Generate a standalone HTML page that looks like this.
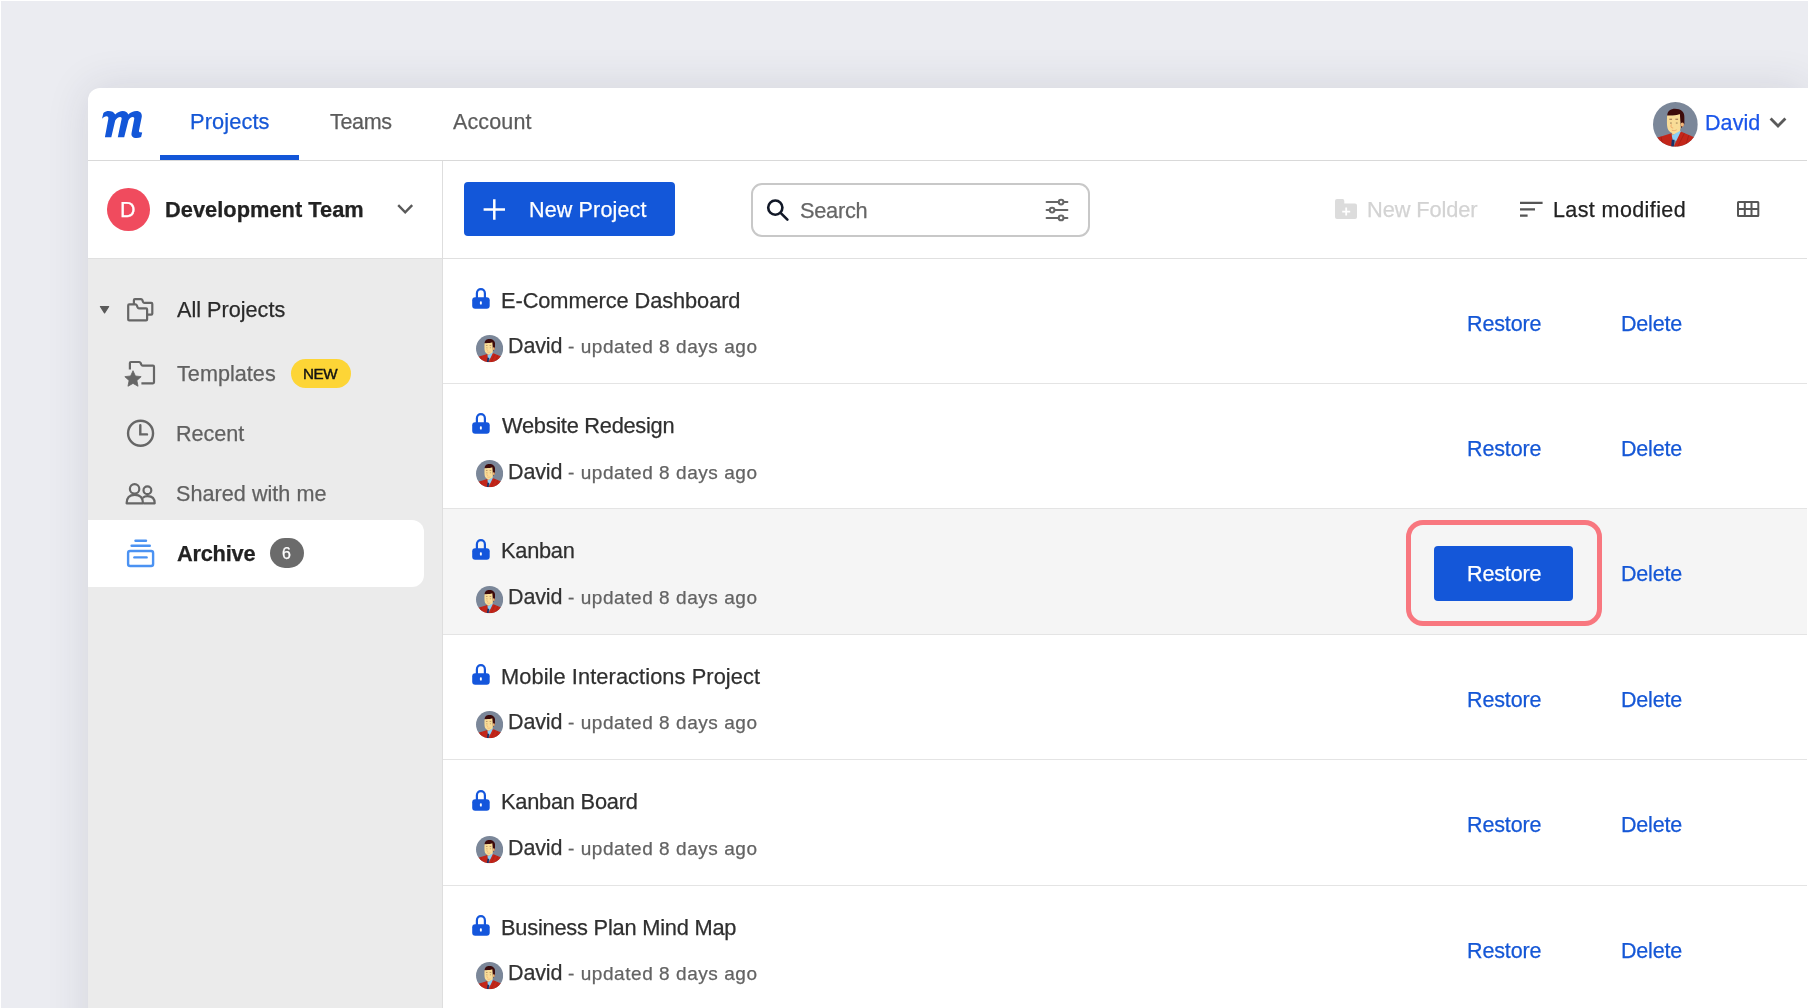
<!DOCTYPE html>
<html><head><meta charset="utf-8"><title>Moqups Archive</title>
<style>
html,body{margin:0;padding:0;width:1808px;height:1008px;overflow:hidden;background:#ebecf1}
body{position:relative;font-family:"Liberation Sans",sans-serif}
.t{position:absolute;white-space:nowrap;-webkit-font-smoothing:antialiased;will-change:transform}
#win{position:absolute;left:88px;top:88px;width:1719px;height:1000px;background:#fff;border-radius:12px 0 0 0;box-shadow:0 0 44px 0 rgba(40,44,70,0.12)}
#hdr{position:absolute;left:88px;top:160px;width:1720px;height:1px;background:#d9d9d9}
#tb{position:absolute;left:88px;top:258px;width:1720px;height:1px;background:#e0e0e0}
#sb{position:absolute;left:88px;top:259px;width:354px;height:760px;background:#ebebeb}
#vl{position:absolute;left:442px;top:161px;width:1px;height:860px;background:#dedede}
#edge{position:absolute;left:0;top:0;width:1808px;height:1px;background:#fff}
#edgel{position:absolute;left:0;top:0;width:1px;height:1008px;background:#fff}
#edger{position:absolute;left:1807px;top:88px;width:1px;height:920px;background:#fff}
</style></head><body>
<div id="edge"></div><div id="edgel"></div>
<div id="win"></div>
<div id="sb"></div>
<svg style="position:absolute;left:98px;top:106px;width:48px;height:36px;overflow:visible" viewBox="98 106 48 36" ><path fill="#1356d8" d="M102.0 118.7 L103.4 113.0 C105 111.6 107 111.1 108.6 111.1 C111.5 111.1 114.2 112.2 115.1 114.6
C117.5 112.3 120.2 111.1 122.7 111.1 C125.6 111.1 127.6 112.4 128.2 114.6 C130.6 112.4 133.6 111.1 136.4 111.1
C140.2 111.1 142.2 113.4 141.8 116.8 L139.0 130.5 C138.8 131.6 139.3 132.3 140.3 132.3 L142.2 132.5 L141.1 137.0
C139.8 137.7 138.2 138.1 136.6 138.1 C132.6 138.1 130.9 136 131.6 132.8 L134.2 119.0 C134.5 117.6 133.9 116.9 132.8 116.9
C131 116.9 129.1 118.5 128.4 120.6 L124.2 137.3 L117.8 137.3 L121.6 119.0 C121.9 117.6 121.3 116.9 120.2 116.9
C118.4 116.9 116.2 118.4 115.2 120.6 L111.3 137.3 L104.9 137.3 L108.3 119.0 C108.6 117.2 108 116.2 106.6 116.2
C105 116.2 103.3 117.3 102.0 118.7 Z"/></svg>
<div class="t" style="left:189.85px;top:111px;font-size:21.8px;line-height:21.8px;color:#1557d6;font-weight:400;letter-spacing:0.107px;-webkit-text-stroke:0.25px #1557d6;">Projects</div>
<div style="position:absolute;left:160px;top:155px;width:139px;height:5px;background:#1356d8"></div>
<div class="t" style="left:329.75px;top:112px;font-size:21.5px;line-height:21.5px;color:#5c5c5c;font-weight:400;letter-spacing:-0.325px;-webkit-text-stroke:0.25px #5c5c5c;">Teams</div>
<div class="t" style="left:452.60px;top:112px;font-size:21.5px;line-height:21.5px;color:#5c5c5c;font-weight:400;letter-spacing:0.125px;-webkit-text-stroke:0.25px #5c5c5c;">Account</div>
<svg style="position:absolute;left:1652.1px;top:101.2px;width:46.8px;height:46.8px;overflow:visible" viewBox="1652.1 101.2 46.8 46.8" ><defs><clipPath id="ch"><circle cx="50" cy="50" r="50"/></clipPath></defs>
<g transform="translate(1653.1,102.19999999999999) scale(0.44799999999999995)"><g clip-path="url(#ch)"><rect x="0" y="0" width="100" height="100" fill="#7b8799"/>
<path d="M32 31 C31 20 40 15 49 15 C62 15 71 22 70 35 L70 49 C68 53 66 56 62 58 L59 30 Z" fill="#3d0b0b"/>
<ellipse cx="65.5" cy="50.5" rx="3.6" ry="5" fill="#f2b67a"/>
<path d="M31.5 30 C40 31 52 30 60 27 L62 57 C61 63 58 68 52 70 C44 71.5 38 68 34.5 63 C31.5 58 30.5 50 31.5 30 Z" fill="#f9dc97"/>
<path d="M42 66 L60 58 L61.5 72 L44 77 Z" fill="#f9dc97"/>
<path d="M43 71 C47 72 51 71 54 68 L55 72 C51 75 47 75 44 74 Z" fill="#f09a5a"/>
<path d="M42 75 L61 64 L65 70 L52 87 L44 84 Z" fill="#8ccef5"/>
<path d="M0 82 L18 77 L41 70 L46 100 L0 100 Z" fill="#c3261a"/>
<path d="M46 100 L62 66 L88 77 L100 83 L100 100 Z" fill="#c3261a"/>
<path d="M18 77 L22 100 M70 70 L55 100 M80 74 L72 100" stroke="#9c1a12" stroke-width="1.3" fill="none"/>
<path d="M42 84 L48 84 L46.5 100 L40.5 100 Z" fill="#15306a"/>
<path d="M36.5 38.5 H42.5 M50 38.5 H56" stroke="#6b3a2a" stroke-width="1.6"/>
<path d="M38 47 H42 M51 47 H55" stroke="#7a5a3a" stroke-width="1.6"/>
<path d="M41 50 C38.5 56 41 58 45 58 M42 63 C46 64.5 50 64 53 62" stroke="#ee9a5c" stroke-width="1.6" fill="none"/></g></g></svg>
<div class="t" style="left:1704.55px;top:113px;font-size:21.5px;line-height:21.5px;color:#1a55ea;font-weight:400;letter-spacing:0.075px;-webkit-text-stroke:0.25px #1a55ea;">David</div>
<svg style="position:absolute;left:1766px;top:114px;width:24px;height:18px;overflow:visible" viewBox="1766 114 24 18" ><path d="M1770.6 118.4 L1778 126 L1785.4 118.4" fill="none" stroke="#5a5a5a" stroke-width="2.8" stroke-linecap="butt"/></svg>
<div style="position:absolute;left:107px;top:188px;width:42.6px;height:42.6px;border-radius:50%;background:#f04b5e"></div>
<div class="t" style="left:120.35px;top:200px;font-size:21.5px;line-height:21.5px;color:#ffffff;font-weight:400;letter-spacing:0px;-webkit-text-stroke:0.25px #ffffff;">D</div>
<div class="t" style="left:165.05px;top:199px;font-size:21.8px;line-height:21.8px;color:#222222;font-weight:700;letter-spacing:0.03px;-webkit-text-stroke:0.25px #222222;">Development Team</div>
<svg style="position:absolute;left:394px;top:201px;width:24px;height:16px;overflow:visible" viewBox="394 201 24 16" ><path d="M398.2 205.2 L405.2 212.4 L412.2 205.2" fill="none" stroke="#5a5a5a" stroke-width="2.4"/></svg>
<div style="position:absolute;left:464px;top:182.4px;width:211px;height:53.7px;border-radius:4px;background:#1357d9"></div>
<svg style="position:absolute;left:480px;top:196px;width:28px;height:28px;overflow:visible" viewBox="480 196 28 28" ><path d="M494.3 199.2 V219.8 M483.6 209.5 H505" stroke="#fff" stroke-width="2.5"/></svg>
<div class="t" style="left:529.25px;top:200px;font-size:21.5px;line-height:21.5px;color:#ffffff;font-weight:400;letter-spacing:0.155px;-webkit-text-stroke:0.25px #ffffff;">New Project</div>
<div style="position:absolute;left:751px;top:182.6px;width:334.5px;height:50px;border:2px solid #c8c8c8;border-radius:11px;background:#fff"></div>
<svg style="position:absolute;left:762px;top:195px;width:30px;height:30px;overflow:visible" viewBox="762 195 30 30" ><circle cx="775.3" cy="207.6" r="7.1" fill="none" stroke="#111827" stroke-width="2.6"/><path d="M780.6 212.9 L787.4 219.7" stroke="#111827" stroke-width="2.6" stroke-linecap="round"/></svg>
<div class="t" style="left:800.20px;top:200px;font-size:21.8px;line-height:21.8px;color:#666666;font-weight:400;letter-spacing:-0.27px;-webkit-text-stroke:0.25px #666666;">Search</div>
<svg style="position:absolute;left:1042px;top:196px;width:30px;height:28px;overflow:visible" viewBox="1042 196 30 28" ><g stroke="#666" stroke-width="2" stroke-linecap="round" fill="none">
<path d="M1046.6 202.1 H1058.6 M1063.6 202.1 H1067.4 M1046.6 210.1 H1049.6 M1054.6 210.1 H1067.4 M1046.6 217.9 H1058.6 M1063.6 217.9 H1067.4"/>
<circle cx="1061.1" cy="202.1" r="2.4"/><circle cx="1052.1" cy="210.1" r="2.4"/><circle cx="1061.1" cy="217.9" r="2.4"/></g></svg>
<svg style="position:absolute;left:1332px;top:196px;width:28px;height:26px;overflow:visible" viewBox="1332 196 28 26" ><path fill="#dcdcdc" d="M1335 201 Q1335 199.1 1337 199.1 H1342.6 Q1344.3 199.1 1344.3 201 V203.5 H1355 Q1357 203.5 1357 205.5 V217 Q1357 219 1355 219 H1337 Q1335 219 1335 217 Z"/>
<path d="M1346.2 207.6 V215.6 M1342.2 211.6 H1350.2" stroke="#fff" stroke-width="1.8"/></svg>
<div class="t" style="left:1366.55px;top:199px;font-size:21.8px;line-height:21.8px;color:#d3d3d3;font-weight:400;letter-spacing:-0.1px;-webkit-text-stroke:0.25px #d3d3d3;">New Folder</div>
<svg style="position:absolute;left:1516px;top:198px;width:30px;height:22px;overflow:visible" viewBox="1516 198 30 22" ><path d="M1520 202.9 H1542.6 M1520 209.4 H1535 M1520 215.7 H1527.6" stroke="#555" stroke-width="2.3"/></svg>
<div class="t" style="left:1553.35px;top:200px;font-size:21.5px;line-height:21.5px;color:#222222;font-weight:400;letter-spacing:0.396px;-webkit-text-stroke:0.25px #222222;">Last modified</div>
<svg style="position:absolute;left:1734px;top:198px;width:28px;height:22px;overflow:visible" viewBox="1734 198 28 22" ><g fill="none" stroke="#555" stroke-width="2"><rect x="1738" y="202" width="20.3" height="14.1" rx="0.5"/><path d="M1744.8 202 V216.1 M1751.5 202 V216.1 M1738 209.05 H1758.3"/></g></svg>
<svg style="position:absolute;left:96px;top:302px;width:16px;height:14px;overflow:visible" viewBox="96 302 16 14" ><path d="M100.4 306.5 L108.7 306.5 L104.55 312.9 Z" fill="#5a5a5a" stroke="#5a5a5a" stroke-width="1.2" stroke-linejoin="round"/></svg>
<svg style="position:absolute;left:122px;top:294px;width:36px;height:32px;overflow:visible" viewBox="122 294 36 32" ><g fill="none" stroke="#666" stroke-width="2.2" stroke-linejoin="round">
<path d="M128.2 305.4 Q128.2 304.4 129.2 304.4 H135.4 Q136.4 304.4 136.8 305.4 L137.6 307.4 Q138 308.4 139 308.4 H146.1 Q147.1 308.4 147.1 309.4 V319.4 Q147.1 320.4 146.1 320.4 H129.2 Q128.2 320.4 128.2 319.4 Z"/>
<path d="M133.9 304.4 V300.2 Q133.9 299.2 134.9 299.2 H141 Q142 299.2 142.4 300.2 L143 301.9 Q143.4 302.9 144.4 302.9 H151.3 Q152.3 302.9 152.3 303.9 V313.7 Q152.3 314.7 151.3 314.7 H147.1"/>
</g></svg>
<div class="t" style="left:177.40px;top:299px;font-size:21.6px;line-height:21.6px;color:#2a2a2a;font-weight:400;letter-spacing:0.023px;-webkit-text-stroke:0.25px #2a2a2a;">All Projects</div>
<svg style="position:absolute;left:122px;top:358px;width:36px;height:32px;overflow:visible" viewBox="122 358 36 32" ><g fill="none" stroke="#666" stroke-width="2.2" stroke-linejoin="round">
<path d="M129.9 369.6 V363 Q129.9 362 130.9 362 H139.2 Q140.2 362 140.6 363 L141.3 364.7 Q141.7 365.7 142.7 365.7 H153 Q154 365.7 154 366.7 V382.3 Q154 383.3 153 383.3 H141.4"/></g>
<path fill="#666" stroke="#666" stroke-width="0.8" stroke-linejoin="round" d="M133.00 370.70 L135.41 375.98 L141.18 376.64 L136.90 380.57 L138.05 386.26 L133.00 383.40 L127.95 386.26 L129.10 380.57 L124.82 376.64 L130.59 375.98 Z"/></svg>
<div class="t" style="left:177.15px;top:363px;font-size:21.6px;line-height:21.6px;color:#616161;font-weight:400;letter-spacing:0.037px;-webkit-text-stroke:0.25px #616161;">Templates</div>
<div style="position:absolute;left:290.9px;top:358.5px;width:60.1px;height:29.8px;border-radius:15px;background:#fdd536"></div>
<div class="t" style="left:303.00px;top:366px;font-size:15.2px;line-height:15.2px;color:#141414;font-weight:400;letter-spacing:-0.425px;-webkit-text-stroke:0.25px #141414;-webkit-text-stroke:0.45px #141414;">NEW</div>
<svg style="position:absolute;left:122px;top:415px;width:36px;height:36px;overflow:visible" viewBox="122 415 36 36" ><g fill="none" stroke="#666" stroke-width="2.4"><circle cx="140.55" cy="433.25" r="12.5"/><path d="M140.3 425.2 V434.4 H147" stroke-linecap="round"/></g></svg>
<div class="t" style="left:176.05px;top:423px;font-size:21.6px;line-height:21.6px;color:#616161;font-weight:400;letter-spacing:-0.03px;-webkit-text-stroke:0.25px #616161;">Recent</div>
<svg style="position:absolute;left:122px;top:478px;width:38px;height:30px;overflow:visible" viewBox="122 478 38 30" ><g fill="none" stroke="#666" stroke-width="2.2" stroke-linejoin="round">
<circle cx="134.6" cy="488.9" r="4.7"/><path d="M126.6 503.3 C126.6 497.6 130 494.8 134.8 494.8 C139.6 494.8 143 497.6 143 503.3 Z"/>
<circle cx="147.4" cy="490.2" r="3.9"/><path d="M143.5 503.3 H154.7 C154.7 498.6 151.8 496.2 147.6 496.2 C145.6 496.2 144 496.8 142.6 497.8"/>
</g></svg>
<div class="t" style="left:176.20px;top:483px;font-size:21.6px;line-height:21.6px;color:#616161;font-weight:400;letter-spacing:0.035px;-webkit-text-stroke:0.25px #616161;">Shared with me</div>
<div style="position:absolute;left:88px;top:519.5px;width:335.9px;height:67.5px;border-radius:0 12px 12px 0;background:#fff"></div>
<svg style="position:absolute;left:122px;top:535px;width:36px;height:36px;overflow:visible" viewBox="122 535 36 36" ><g fill="none" stroke="#4b92f2" stroke-width="2.4" stroke-linecap="round">
<path d="M135.5 540.8 H146"/><path d="M131.6 545.8 H149.8"/>
<rect x="128.1" y="551" width="25" height="15" rx="2"/><path d="M134.4 557.4 H146.6"/></g></svg>
<div class="t" style="left:176.70px;top:543px;font-size:21.8px;line-height:21.8px;color:#222222;font-weight:700;letter-spacing:-0.242px;-webkit-text-stroke:0.25px #222222;">Archive</div>
<div style="position:absolute;left:270px;top:538.4px;width:33.7px;height:29.8px;border-radius:15px;background:#6b6b6b"></div>
<div class="t" style="left:281.95px;top:546px;font-size:16px;line-height:16px;color:#ffffff;font-weight:400;letter-spacing:0px;-webkit-text-stroke:0.25px #ffffff;">6</div>
<div style="position:absolute;left:443px;top:258.60px;width:1365px;height:125.40px;background:#ffffff;border-bottom:1px solid #e4e4e4;box-sizing:border-box"></div>
<svg style="position:absolute;left:468px;top:284.0px;width:28px;height:28px;overflow:visible" viewBox="468 284.0 28 28" ><g fill="#1456dc"><rect x="472.2" y="297.20" width="17.5" height="11.5" rx="3"/></g>
<path d="M476.9 298.50 V293.20 A4 4 0 0 1 484.9 293.20 V298.50" fill="none" stroke="#1456dc" stroke-width="2.2"/>
<rect x="479.9" y="301.20" width="1.9" height="3.4" rx="0.9" fill="#fff"/></svg>
<div class="t" style="left:500.55px;top:290px;font-size:21.8px;line-height:21.8px;color:#2f2f2f;font-weight:400;letter-spacing:-0.084px;-webkit-text-stroke:0.25px #2f2f2f;">E-Commerce Dashboard</div>
<svg style="position:absolute;left:475.3px;top:333.7px;width:29.2px;height:29.2px;overflow:visible" viewBox="475.3 333.7 29.2 29.2" ><defs><clipPath id="cr0"><circle cx="50" cy="50" r="50"/></clipPath></defs>
<g transform="translate(476.29999999999995,334.7) scale(0.272)"><g clip-path="url(#cr0)"><rect x="0" y="0" width="100" height="100" fill="#7b8799"/>
<path d="M32 31 C31 20 40 15 49 15 C62 15 71 22 70 35 L70 49 C68 53 66 56 62 58 L59 30 Z" fill="#3d0b0b"/>
<ellipse cx="65.5" cy="50.5" rx="3.6" ry="5" fill="#f2b67a"/>
<path d="M31.5 30 C40 31 52 30 60 27 L62 57 C61 63 58 68 52 70 C44 71.5 38 68 34.5 63 C31.5 58 30.5 50 31.5 30 Z" fill="#f9dc97"/>
<path d="M42 66 L60 58 L61.5 72 L44 77 Z" fill="#f9dc97"/>
<path d="M43 71 C47 72 51 71 54 68 L55 72 C51 75 47 75 44 74 Z" fill="#f09a5a"/>
<path d="M42 75 L61 64 L65 70 L52 87 L44 84 Z" fill="#8ccef5"/>
<path d="M0 82 L18 77 L41 70 L46 100 L0 100 Z" fill="#c3261a"/>
<path d="M46 100 L62 66 L88 77 L100 83 L100 100 Z" fill="#c3261a"/>
<path d="M18 77 L22 100 M70 70 L55 100 M80 74 L72 100" stroke="#9c1a12" stroke-width="1.3" fill="none"/>
<path d="M42 84 L48 84 L46.5 100 L40.5 100 Z" fill="#15306a"/>
<path d="M36.5 38.5 H42.5 M50 38.5 H56" stroke="#6b3a2a" stroke-width="1.6"/>
<path d="M38 47 H42 M51 47 H55" stroke="#7a5a3a" stroke-width="1.6"/>
<path d="M41 50 C38.5 56 41 58 45 58 M42 63 C46 64.5 50 64 53 62" stroke="#ee9a5c" stroke-width="1.6" fill="none"/></g></g></svg>
<div class="t" style="left:507.55px;top:336px;font-size:21.5px;line-height:21.5px;color:#333333;font-weight:400;letter-spacing:-0.15px;-webkit-text-stroke:0.25px #333333;">David</div>
<div class="t" style="left:568.35px;top:337px;font-size:19.0px;line-height:19.0px;color:#636363;font-weight:400;letter-spacing:0.553px;-webkit-text-stroke:0.25px #636363;">- updated 8 days ago</div>
<div class="t" style="left:1466.85px;top:314px;font-size:21.5px;line-height:21.5px;color:#1557d6;font-weight:400;letter-spacing:-0.125px;-webkit-text-stroke:0.25px #1557d6;">Restore</div>
<div class="t" style="left:1621.25px;top:314px;font-size:21.5px;line-height:21.5px;color:#1557d6;font-weight:400;letter-spacing:-0.18px;-webkit-text-stroke:0.25px #1557d6;">Delete</div>
<div style="position:absolute;left:443px;top:384.00px;width:1365px;height:125.40px;background:#ffffff;border-bottom:1px solid #e4e4e4;box-sizing:border-box"></div>
<svg style="position:absolute;left:468px;top:409.4px;width:28px;height:28px;overflow:visible" viewBox="468 409.4 28 28" ><g fill="#1456dc"><rect x="472.2" y="422.60" width="17.5" height="11.5" rx="3"/></g>
<path d="M476.9 423.90 V418.60 A4 4 0 0 1 484.9 418.60 V423.90" fill="none" stroke="#1456dc" stroke-width="2.2"/>
<rect x="479.9" y="426.60" width="1.9" height="3.4" rx="0.9" fill="#fff"/></svg>
<div class="t" style="left:502.30px;top:415px;font-size:21.8px;line-height:21.8px;color:#2f2f2f;font-weight:400;letter-spacing:-0.263px;-webkit-text-stroke:0.25px #2f2f2f;">Website Redesign</div>
<svg style="position:absolute;left:475.3px;top:459.1px;width:29.2px;height:29.2px;overflow:visible" viewBox="475.3 459.1 29.2 29.2" ><defs><clipPath id="cr1"><circle cx="50" cy="50" r="50"/></clipPath></defs>
<g transform="translate(476.29999999999995,460.1) scale(0.272)"><g clip-path="url(#cr1)"><rect x="0" y="0" width="100" height="100" fill="#7b8799"/>
<path d="M32 31 C31 20 40 15 49 15 C62 15 71 22 70 35 L70 49 C68 53 66 56 62 58 L59 30 Z" fill="#3d0b0b"/>
<ellipse cx="65.5" cy="50.5" rx="3.6" ry="5" fill="#f2b67a"/>
<path d="M31.5 30 C40 31 52 30 60 27 L62 57 C61 63 58 68 52 70 C44 71.5 38 68 34.5 63 C31.5 58 30.5 50 31.5 30 Z" fill="#f9dc97"/>
<path d="M42 66 L60 58 L61.5 72 L44 77 Z" fill="#f9dc97"/>
<path d="M43 71 C47 72 51 71 54 68 L55 72 C51 75 47 75 44 74 Z" fill="#f09a5a"/>
<path d="M42 75 L61 64 L65 70 L52 87 L44 84 Z" fill="#8ccef5"/>
<path d="M0 82 L18 77 L41 70 L46 100 L0 100 Z" fill="#c3261a"/>
<path d="M46 100 L62 66 L88 77 L100 83 L100 100 Z" fill="#c3261a"/>
<path d="M18 77 L22 100 M70 70 L55 100 M80 74 L72 100" stroke="#9c1a12" stroke-width="1.3" fill="none"/>
<path d="M42 84 L48 84 L46.5 100 L40.5 100 Z" fill="#15306a"/>
<path d="M36.5 38.5 H42.5 M50 38.5 H56" stroke="#6b3a2a" stroke-width="1.6"/>
<path d="M38 47 H42 M51 47 H55" stroke="#7a5a3a" stroke-width="1.6"/>
<path d="M41 50 C38.5 56 41 58 45 58 M42 63 C46 64.5 50 64 53 62" stroke="#ee9a5c" stroke-width="1.6" fill="none"/></g></g></svg>
<div class="t" style="left:507.55px;top:462px;font-size:21.5px;line-height:21.5px;color:#333333;font-weight:400;letter-spacing:-0.15px;-webkit-text-stroke:0.25px #333333;">David</div>
<div class="t" style="left:568.35px;top:463px;font-size:19.0px;line-height:19.0px;color:#636363;font-weight:400;letter-spacing:0.553px;-webkit-text-stroke:0.25px #636363;">- updated 8 days ago</div>
<div class="t" style="left:1466.85px;top:439px;font-size:21.5px;line-height:21.5px;color:#1557d6;font-weight:400;letter-spacing:-0.125px;-webkit-text-stroke:0.25px #1557d6;">Restore</div>
<div class="t" style="left:1621.25px;top:439px;font-size:21.5px;line-height:21.5px;color:#1557d6;font-weight:400;letter-spacing:-0.18px;-webkit-text-stroke:0.25px #1557d6;">Delete</div>
<div style="position:absolute;left:443px;top:509.40px;width:1365px;height:125.40px;background:#f5f5f5;border-bottom:1px solid #e4e4e4;box-sizing:border-box"></div>
<svg style="position:absolute;left:468px;top:534.8px;width:28px;height:28px;overflow:visible" viewBox="468 534.8 28 28" ><g fill="#1456dc"><rect x="472.2" y="548.00" width="17.5" height="11.5" rx="3"/></g>
<path d="M476.9 549.30 V544.00 A4 4 0 0 1 484.9 544.00 V549.30" fill="none" stroke="#1456dc" stroke-width="2.2"/>
<rect x="479.9" y="552.00" width="1.9" height="3.4" rx="0.9" fill="#fff"/></svg>
<div class="t" style="left:500.55px;top:540px;font-size:21.8px;line-height:21.8px;color:#2f2f2f;font-weight:400;letter-spacing:-0.26px;-webkit-text-stroke:0.25px #2f2f2f;">Kanban</div>
<svg style="position:absolute;left:475.3px;top:584.5px;width:29.2px;height:29.2px;overflow:visible" viewBox="475.3 584.5 29.2 29.2" ><defs><clipPath id="cr2"><circle cx="50" cy="50" r="50"/></clipPath></defs>
<g transform="translate(476.29999999999995,585.5) scale(0.272)"><g clip-path="url(#cr2)"><rect x="0" y="0" width="100" height="100" fill="#7b8799"/>
<path d="M32 31 C31 20 40 15 49 15 C62 15 71 22 70 35 L70 49 C68 53 66 56 62 58 L59 30 Z" fill="#3d0b0b"/>
<ellipse cx="65.5" cy="50.5" rx="3.6" ry="5" fill="#f2b67a"/>
<path d="M31.5 30 C40 31 52 30 60 27 L62 57 C61 63 58 68 52 70 C44 71.5 38 68 34.5 63 C31.5 58 30.5 50 31.5 30 Z" fill="#f9dc97"/>
<path d="M42 66 L60 58 L61.5 72 L44 77 Z" fill="#f9dc97"/>
<path d="M43 71 C47 72 51 71 54 68 L55 72 C51 75 47 75 44 74 Z" fill="#f09a5a"/>
<path d="M42 75 L61 64 L65 70 L52 87 L44 84 Z" fill="#8ccef5"/>
<path d="M0 82 L18 77 L41 70 L46 100 L0 100 Z" fill="#c3261a"/>
<path d="M46 100 L62 66 L88 77 L100 83 L100 100 Z" fill="#c3261a"/>
<path d="M18 77 L22 100 M70 70 L55 100 M80 74 L72 100" stroke="#9c1a12" stroke-width="1.3" fill="none"/>
<path d="M42 84 L48 84 L46.5 100 L40.5 100 Z" fill="#15306a"/>
<path d="M36.5 38.5 H42.5 M50 38.5 H56" stroke="#6b3a2a" stroke-width="1.6"/>
<path d="M38 47 H42 M51 47 H55" stroke="#7a5a3a" stroke-width="1.6"/>
<path d="M41 50 C38.5 56 41 58 45 58 M42 63 C46 64.5 50 64 53 62" stroke="#ee9a5c" stroke-width="1.6" fill="none"/></g></g></svg>
<div class="t" style="left:507.55px;top:587px;font-size:21.5px;line-height:21.5px;color:#333333;font-weight:400;letter-spacing:-0.15px;-webkit-text-stroke:0.25px #333333;">David</div>
<div class="t" style="left:568.35px;top:588px;font-size:19.0px;line-height:19.0px;color:#636363;font-weight:400;letter-spacing:0.553px;-webkit-text-stroke:0.25px #636363;">- updated 8 days ago</div>
<div style="position:absolute;left:1406px;top:519.90px;width:196px;height:106px;border:5.5px solid #f8777f;border-radius:17px;box-sizing:border-box"></div>
<div style="position:absolute;left:1433.9px;top:545.8px;width:139.4px;height:55.4px;border-radius:4px;background:#1457d9"></div>
<div class="t" style="left:1466.85px;top:564px;font-size:21.5px;line-height:21.5px;color:#ffffff;font-weight:400;letter-spacing:-0.125px;-webkit-text-stroke:0.25px #ffffff;">Restore</div>
<div class="t" style="left:1621.25px;top:564px;font-size:21.5px;line-height:21.5px;color:#1557d6;font-weight:400;letter-spacing:-0.18px;-webkit-text-stroke:0.25px #1557d6;">Delete</div>
<div style="position:absolute;left:443px;top:634.80px;width:1365px;height:125.40px;background:#ffffff;border-bottom:1px solid #e4e4e4;box-sizing:border-box"></div>
<svg style="position:absolute;left:468px;top:660.2px;width:28px;height:28px;overflow:visible" viewBox="468 660.2 28 28" ><g fill="#1456dc"><rect x="472.2" y="673.40" width="17.5" height="11.5" rx="3"/></g>
<path d="M476.9 674.70 V669.40 A4 4 0 0 1 484.9 669.40 V674.70" fill="none" stroke="#1456dc" stroke-width="2.2"/>
<rect x="479.9" y="677.40" width="1.9" height="3.4" rx="0.9" fill="#fff"/></svg>
<div class="t" style="left:500.55px;top:666px;font-size:21.8px;line-height:21.8px;color:#2f2f2f;font-weight:400;letter-spacing:0.085px;-webkit-text-stroke:0.25px #2f2f2f;">Mobile Interactions Project</div>
<svg style="position:absolute;left:475.3px;top:709.9px;width:29.2px;height:29.2px;overflow:visible" viewBox="475.3 709.9 29.2 29.2" ><defs><clipPath id="cr3"><circle cx="50" cy="50" r="50"/></clipPath></defs>
<g transform="translate(476.29999999999995,710.9) scale(0.272)"><g clip-path="url(#cr3)"><rect x="0" y="0" width="100" height="100" fill="#7b8799"/>
<path d="M32 31 C31 20 40 15 49 15 C62 15 71 22 70 35 L70 49 C68 53 66 56 62 58 L59 30 Z" fill="#3d0b0b"/>
<ellipse cx="65.5" cy="50.5" rx="3.6" ry="5" fill="#f2b67a"/>
<path d="M31.5 30 C40 31 52 30 60 27 L62 57 C61 63 58 68 52 70 C44 71.5 38 68 34.5 63 C31.5 58 30.5 50 31.5 30 Z" fill="#f9dc97"/>
<path d="M42 66 L60 58 L61.5 72 L44 77 Z" fill="#f9dc97"/>
<path d="M43 71 C47 72 51 71 54 68 L55 72 C51 75 47 75 44 74 Z" fill="#f09a5a"/>
<path d="M42 75 L61 64 L65 70 L52 87 L44 84 Z" fill="#8ccef5"/>
<path d="M0 82 L18 77 L41 70 L46 100 L0 100 Z" fill="#c3261a"/>
<path d="M46 100 L62 66 L88 77 L100 83 L100 100 Z" fill="#c3261a"/>
<path d="M18 77 L22 100 M70 70 L55 100 M80 74 L72 100" stroke="#9c1a12" stroke-width="1.3" fill="none"/>
<path d="M42 84 L48 84 L46.5 100 L40.5 100 Z" fill="#15306a"/>
<path d="M36.5 38.5 H42.5 M50 38.5 H56" stroke="#6b3a2a" stroke-width="1.6"/>
<path d="M38 47 H42 M51 47 H55" stroke="#7a5a3a" stroke-width="1.6"/>
<path d="M41 50 C38.5 56 41 58 45 58 M42 63 C46 64.5 50 64 53 62" stroke="#ee9a5c" stroke-width="1.6" fill="none"/></g></g></svg>
<div class="t" style="left:507.55px;top:712px;font-size:21.5px;line-height:21.5px;color:#333333;font-weight:400;letter-spacing:-0.15px;-webkit-text-stroke:0.25px #333333;">David</div>
<div class="t" style="left:568.35px;top:713px;font-size:19.0px;line-height:19.0px;color:#636363;font-weight:400;letter-spacing:0.553px;-webkit-text-stroke:0.25px #636363;">- updated 8 days ago</div>
<div class="t" style="left:1466.85px;top:690px;font-size:21.5px;line-height:21.5px;color:#1557d6;font-weight:400;letter-spacing:-0.125px;-webkit-text-stroke:0.25px #1557d6;">Restore</div>
<div class="t" style="left:1621.25px;top:690px;font-size:21.5px;line-height:21.5px;color:#1557d6;font-weight:400;letter-spacing:-0.18px;-webkit-text-stroke:0.25px #1557d6;">Delete</div>
<div style="position:absolute;left:443px;top:760.20px;width:1365px;height:125.40px;background:#ffffff;border-bottom:1px solid #e4e4e4;box-sizing:border-box"></div>
<svg style="position:absolute;left:468px;top:785.6px;width:28px;height:28px;overflow:visible" viewBox="468 785.6 28 28" ><g fill="#1456dc"><rect x="472.2" y="798.80" width="17.5" height="11.5" rx="3"/></g>
<path d="M476.9 800.10 V794.80 A4 4 0 0 1 484.9 794.80 V800.10" fill="none" stroke="#1456dc" stroke-width="2.2"/>
<rect x="479.9" y="802.80" width="1.9" height="3.4" rx="0.9" fill="#fff"/></svg>
<div class="t" style="left:500.55px;top:791px;font-size:21.8px;line-height:21.8px;color:#2f2f2f;font-weight:400;letter-spacing:-0.232px;-webkit-text-stroke:0.25px #2f2f2f;">Kanban Board</div>
<svg style="position:absolute;left:475.3px;top:835.3px;width:29.2px;height:29.2px;overflow:visible" viewBox="475.3 835.3 29.2 29.2" ><defs><clipPath id="cr4"><circle cx="50" cy="50" r="50"/></clipPath></defs>
<g transform="translate(476.29999999999995,836.3000000000001) scale(0.272)"><g clip-path="url(#cr4)"><rect x="0" y="0" width="100" height="100" fill="#7b8799"/>
<path d="M32 31 C31 20 40 15 49 15 C62 15 71 22 70 35 L70 49 C68 53 66 56 62 58 L59 30 Z" fill="#3d0b0b"/>
<ellipse cx="65.5" cy="50.5" rx="3.6" ry="5" fill="#f2b67a"/>
<path d="M31.5 30 C40 31 52 30 60 27 L62 57 C61 63 58 68 52 70 C44 71.5 38 68 34.5 63 C31.5 58 30.5 50 31.5 30 Z" fill="#f9dc97"/>
<path d="M42 66 L60 58 L61.5 72 L44 77 Z" fill="#f9dc97"/>
<path d="M43 71 C47 72 51 71 54 68 L55 72 C51 75 47 75 44 74 Z" fill="#f09a5a"/>
<path d="M42 75 L61 64 L65 70 L52 87 L44 84 Z" fill="#8ccef5"/>
<path d="M0 82 L18 77 L41 70 L46 100 L0 100 Z" fill="#c3261a"/>
<path d="M46 100 L62 66 L88 77 L100 83 L100 100 Z" fill="#c3261a"/>
<path d="M18 77 L22 100 M70 70 L55 100 M80 74 L72 100" stroke="#9c1a12" stroke-width="1.3" fill="none"/>
<path d="M42 84 L48 84 L46.5 100 L40.5 100 Z" fill="#15306a"/>
<path d="M36.5 38.5 H42.5 M50 38.5 H56" stroke="#6b3a2a" stroke-width="1.6"/>
<path d="M38 47 H42 M51 47 H55" stroke="#7a5a3a" stroke-width="1.6"/>
<path d="M41 50 C38.5 56 41 58 45 58 M42 63 C46 64.5 50 64 53 62" stroke="#ee9a5c" stroke-width="1.6" fill="none"/></g></g></svg>
<div class="t" style="left:507.55px;top:838px;font-size:21.5px;line-height:21.5px;color:#333333;font-weight:400;letter-spacing:-0.15px;-webkit-text-stroke:0.25px #333333;">David</div>
<div class="t" style="left:568.35px;top:839px;font-size:19.0px;line-height:19.0px;color:#636363;font-weight:400;letter-spacing:0.553px;-webkit-text-stroke:0.25px #636363;">- updated 8 days ago</div>
<div class="t" style="left:1466.85px;top:815px;font-size:21.5px;line-height:21.5px;color:#1557d6;font-weight:400;letter-spacing:-0.125px;-webkit-text-stroke:0.25px #1557d6;">Restore</div>
<div class="t" style="left:1621.25px;top:815px;font-size:21.5px;line-height:21.5px;color:#1557d6;font-weight:400;letter-spacing:-0.18px;-webkit-text-stroke:0.25px #1557d6;">Delete</div>
<div style="position:absolute;left:443px;top:885.60px;width:1365px;height:125.40px;background:#ffffff;border-bottom:1px solid #e4e4e4;box-sizing:border-box"></div>
<svg style="position:absolute;left:468px;top:911.0px;width:28px;height:28px;overflow:visible" viewBox="468 911.0 28 28" ><g fill="#1456dc"><rect x="472.2" y="924.20" width="17.5" height="11.5" rx="3"/></g>
<path d="M476.9 925.50 V920.20 A4 4 0 0 1 484.9 920.20 V925.50" fill="none" stroke="#1456dc" stroke-width="2.2"/>
<rect x="479.9" y="928.20" width="1.9" height="3.4" rx="0.9" fill="#fff"/></svg>
<div class="t" style="left:500.55px;top:917px;font-size:21.8px;line-height:21.8px;color:#2f2f2f;font-weight:400;letter-spacing:-0.212px;-webkit-text-stroke:0.25px #2f2f2f;">Business Plan Mind Map</div>
<svg style="position:absolute;left:475.3px;top:960.7px;width:29.2px;height:29.2px;overflow:visible" viewBox="475.3 960.7 29.2 29.2" ><defs><clipPath id="cr5"><circle cx="50" cy="50" r="50"/></clipPath></defs>
<g transform="translate(476.29999999999995,961.6999999999999) scale(0.272)"><g clip-path="url(#cr5)"><rect x="0" y="0" width="100" height="100" fill="#7b8799"/>
<path d="M32 31 C31 20 40 15 49 15 C62 15 71 22 70 35 L70 49 C68 53 66 56 62 58 L59 30 Z" fill="#3d0b0b"/>
<ellipse cx="65.5" cy="50.5" rx="3.6" ry="5" fill="#f2b67a"/>
<path d="M31.5 30 C40 31 52 30 60 27 L62 57 C61 63 58 68 52 70 C44 71.5 38 68 34.5 63 C31.5 58 30.5 50 31.5 30 Z" fill="#f9dc97"/>
<path d="M42 66 L60 58 L61.5 72 L44 77 Z" fill="#f9dc97"/>
<path d="M43 71 C47 72 51 71 54 68 L55 72 C51 75 47 75 44 74 Z" fill="#f09a5a"/>
<path d="M42 75 L61 64 L65 70 L52 87 L44 84 Z" fill="#8ccef5"/>
<path d="M0 82 L18 77 L41 70 L46 100 L0 100 Z" fill="#c3261a"/>
<path d="M46 100 L62 66 L88 77 L100 83 L100 100 Z" fill="#c3261a"/>
<path d="M18 77 L22 100 M70 70 L55 100 M80 74 L72 100" stroke="#9c1a12" stroke-width="1.3" fill="none"/>
<path d="M42 84 L48 84 L46.5 100 L40.5 100 Z" fill="#15306a"/>
<path d="M36.5 38.5 H42.5 M50 38.5 H56" stroke="#6b3a2a" stroke-width="1.6"/>
<path d="M38 47 H42 M51 47 H55" stroke="#7a5a3a" stroke-width="1.6"/>
<path d="M41 50 C38.5 56 41 58 45 58 M42 63 C46 64.5 50 64 53 62" stroke="#ee9a5c" stroke-width="1.6" fill="none"/></g></g></svg>
<div class="t" style="left:507.55px;top:963px;font-size:21.5px;line-height:21.5px;color:#333333;font-weight:400;letter-spacing:-0.15px;-webkit-text-stroke:0.25px #333333;">David</div>
<div class="t" style="left:568.35px;top:964px;font-size:19.0px;line-height:19.0px;color:#636363;font-weight:400;letter-spacing:0.553px;-webkit-text-stroke:0.25px #636363;">- updated 8 days ago</div>
<div class="t" style="left:1466.85px;top:941px;font-size:21.5px;line-height:21.5px;color:#1557d6;font-weight:400;letter-spacing:-0.125px;-webkit-text-stroke:0.25px #1557d6;">Restore</div>
<div class="t" style="left:1621.25px;top:941px;font-size:21.5px;line-height:21.5px;color:#1557d6;font-weight:400;letter-spacing:-0.18px;-webkit-text-stroke:0.25px #1557d6;">Delete</div>
<div id="hdr"></div><div id="tb"></div><div id="vl"></div>
<div id="edger"></div>
</body></html>
